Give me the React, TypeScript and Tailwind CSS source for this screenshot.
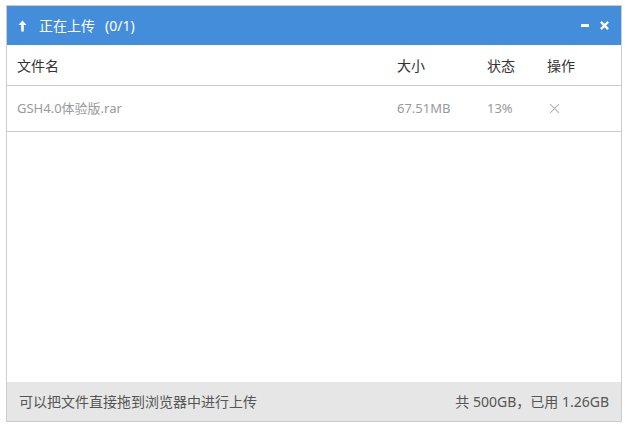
const font = { fontFamily: '"Noto Sans", "Noto Sans CJK SC", sans-serif' };

function UpArrow() {
  return (
    <svg width="9" height="12" viewBox="0 0 9 12" fill="none">
      <path d="M4.5 0.5 L0.5 5 H3.2 V11.5 H5.8 V5 H8.5 Z" fill="#fff" />
    </svg>
  );
}

function CloseGlyph({ size, stroke, width }: { size: number; stroke: string; width: number }) {
  return (
    <svg width={size} height={size} viewBox="0 0 10 10" fill="none">
      <path d="M1 1 L9 9 M9 1 L1 9" stroke={stroke} strokeWidth={width} />
    </svg>
  );
}

export default function App() {
  return (
    <div className="w-[627px] h-[426px] bg-white pl-[6px] pt-[5px]" style={font}>
      <div className="w-[616px] h-[417px] border border-[#cccccc] flex flex-col">
        {/* title bar */}
        <div className="h-[39px] bg-[#448dda] flex items-center pl-[11px] pr-[12px] text-white text-[14px]">
          <UpArrow />
          <span className="ml-[12px] leading-none">正在上传</span>
          <span className="ml-[10px] leading-none">(0/1)</span>
          <div className="ml-auto flex items-center gap-[11px]">
            <span className="block w-[8px] h-[3px] bg-white" />
            <CloseGlyph size={9} stroke="#fff" width={2.6} />
          </div>
        </div>

        {/* column headings */}
        <div className="h-[41px] flex items-center border-b border-[#cccccc] text-[14px] text-[#333]">
          <div className="flex-1 pl-[10px]">文件名</div>
          <div className="w-[90px]">大小</div>
          <div className="w-[60px]">状态</div>
          <div className="w-[74px]">操作</div>
        </div>

        {/* upload row */}
        <div className="h-[46px] flex items-center border-b border-[#cccccc] text-[13px] text-[#9a9a9a]">
          <div className="flex-1 pl-[10px]">GSH4.0体验版.rar</div>
          <div className="w-[90px]">67.51MB</div>
          <div className="w-[60px]">13%</div>
          <div className="w-[74px] pl-[2px] flex items-center">
            <CloseGlyph size={11} stroke="#b4b4b4" width={1} />
          </div>
        </div>

        <div className="flex-1" />

        {/* footer */}
        <div className="h-[39px] bg-[#e6e6e6] flex items-center justify-between pl-[12px] pr-[12px] text-[14px] text-[#555]">
          <span>可以把文件直接拖到浏览器中进行上传</span>
          <span>共 500GB，已用 1.26GB</span>
        </div>
      </div>
    </div>
  );
}
